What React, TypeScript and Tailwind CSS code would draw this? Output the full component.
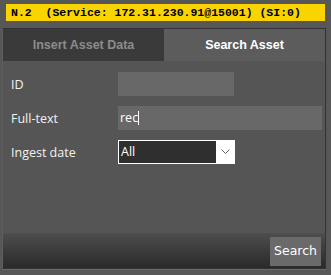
export default function App() {
  return (
    <div className="w-[331px] h-[275px] bg-[#575757] flex flex-col overflow-hidden" style={{ fontFamily: '"Open Sans", sans-serif' }}>
      {/* status bar */}
      <div className="mx-[6px] mt-[4px] h-[17px] bg-[#fad400] flex items-center pl-[5px]">
        <span className="text-[11.5px] font-bold text-black whitespace-pre leading-none" style={{ fontFamily: '"Liberation Mono", monospace' }}>
          N.2  (Service: 172.31.230.91@15001) (SI:0)
        </span>
      </div>

      <div className="ml-[2px] mr-[5px] mt-[7px] h-[241px] border border-[#333] border-l-[#5e5e5e] flex flex-col">
        {/* tabs */}
        <div className="flex h-[32px]">
          <button className="flex-1 bg-[#3a3a3a] text-[#8c8c8c] text-[12.5px] font-bold" style={{ fontFamily: '"Liberation Sans", sans-serif' }}>
            Insert Asset Data
          </button>
          <button className="flex-1 bg-[#5c5c5c] text-white text-[12.5px] font-bold" style={{ fontFamily: '"Liberation Sans", sans-serif' }}>
            Search Asset
          </button>
        </div>

        {/* form */}
        <div className="flex-1 bg-[#555] pt-[11px] pl-[8px] pr-[3px] flex flex-col gap-[10px]">
          <div className="flex items-center h-[24px]">
            <span className="w-[107px] text-[12.5px] text-[#f2f2f2] pt-[2px]">ID</span>
            <div className="w-[116px] h-[24px] bg-[#686868]" />
          </div>
          <div className="flex items-center h-[24px]">
            <span className="w-[107px] text-[12.5px] text-[#f2f2f2] pt-[2px]">Full-text</span>
            <div className="flex-1 h-[24px] bg-[#686868] flex items-center pl-[2px] text-[12.5px] text-white">
              rec<span className="w-px h-[14px] bg-white" />
            </div>
          </div>
          <div className="flex items-center h-[24px]">
            <span className="w-[107px] text-[12.5px] text-[#f2f2f2] pt-[2px]">Ingest date</span>
            <div className="w-[117px] h-[24px] border border-white flex">
              <div className="flex-1 bg-[#2f2f2f] text-white text-[12.5px] flex items-center pl-[2px]">All</div>
              <div className="w-[18px] bg-white flex items-center justify-center">
                <svg width="9" height="6" viewBox="0 0 9 6" fill="none" stroke="#666" strokeWidth="1">
                  <path d="M0.5 0.5 L4.5 4.5 L8.5 0.5" />
                </svg>
              </div>
            </div>
          </div>
        </div>

        {/* footer */}
        <div className="h-[35px] bg-gradient-to-b from-[#4e4e4e] to-[#2a2a2a] flex items-start justify-end pt-[4px] pr-[4px]">
          <button className="w-[51px] h-[29px] bg-[#6a6a6a] text-white text-[12.5px]" style={{ fontFamily: '"DejaVu Sans", sans-serif' }}>
            Search
          </button>
        </div>
      </div>
      <div className="ml-[2px] mr-[5px] h-px bg-[#6a6a6a]" />
    </div>
  );
}
